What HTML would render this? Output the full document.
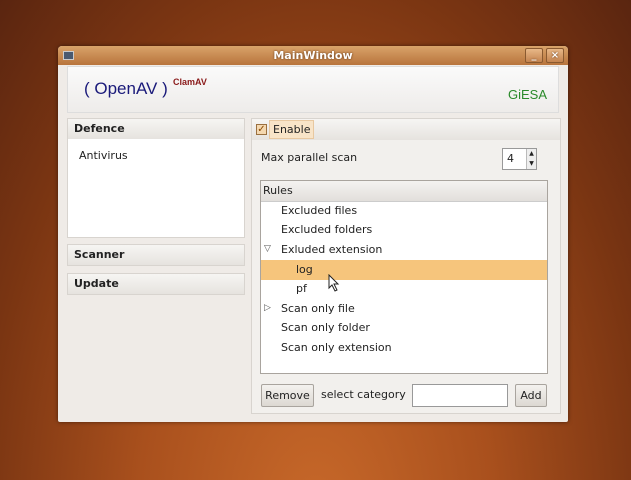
<html><head><style>
body{margin:0;width:631px;height:480px;overflow:hidden;font-family:"DejaVu Sans","Liberation Sans",sans-serif;font-size:11px;color:#222;
background:radial-gradient(ellipse at 50% 110%,#c8692a 0%,#a9501d 40%,#7a3512 75%,#5a2510 100%);position:relative}
*{box-sizing:border-box}
.a{position:absolute}
.win{left:58px;top:46px;width:510px;height:376px;background:#efebe7;border-radius:4px 4px 2px 2px;box-shadow:0 0 4px rgba(0,0,0,.5)}
.title{left:0;top:0;width:510px;height:19px;background:linear-gradient(#d9a36a,#b8743c);border-radius:4px 4px 0 0;color:#fff;font-weight:bold;text-align:center;line-height:19px;font-size:11px;text-shadow:0 0 2px #5a3010}
.tb{top:2px;width:18px;height:15px;border:1px solid #8a5a30;border-radius:2px;background:linear-gradient(#e8b888,#c48450);color:#fff;font-size:10px;line-height:13px;text-align:center;font-weight:bold}
.hdr{left:9px;top:20px;width:492px;height:47px;background:linear-gradient(#fafafa,#eeecea);border:1px solid #ddd}
.ph{background:linear-gradient(#f6f5f3,#e6e3df);border:1px solid #d8d4cf;font-weight:bold;height:22px;line-height:20px;padding-left:6px}
.row{position:absolute;left:20px;height:19px;line-height:19px}
.btn{border:1px solid #a9a49e;border-radius:2px;background:linear-gradient(#f4f2ef,#dcd8d2);height:23px;line-height:21px;text-align:center}
</style></head><body>
<div class="a win">
 <div class="a title">MainWindow
  <div class="a" style="left:5px;top:5px;width:11px;height:9px;background:#4a5a70;border:1px solid #ccc"></div>
  <div class="a tb" style="left:467px">_</div><div class="a tb" style="left:488px">×</div>
 </div>
 <div class="a hdr">
  <div class="a" style="left:16px;top:12px;font-size:17px;color:#1a1a7a;font-family:'Liberation Sans',sans-serif">( OpenAV )</div>
  <div class="a" style="left:105px;top:10px;font-size:9px;color:#8a1a1a;font-weight:bold;font-family:'Liberation Sans',sans-serif">ClamAV</div>
  <div class="a" style="left:440px;top:20px;font-size:13px;color:#2a8a2a;font-family:'Liberation Sans',sans-serif">GiESA</div>
 </div>
 <div class="a ph" style="left:9px;top:72px;width:178px">Defence</div>
 <div class="a" style="left:9px;top:93px;width:178px;height:99px;background:#fff;border:1px solid #d8d4cf;border-top:0"><div style="padding:10px 11px">Antivirus</div></div>
 <div class="a ph" style="left:9px;top:198px;width:178px">Scanner</div>
 <div class="a ph" style="left:9px;top:227px;width:178px">Update</div>
 <div class="a" style="left:193px;top:72px;width:310px;height:296px;background:#f2f0ed;border:1px solid #d8d4cf">
  <div class="a" style="left:0;top:0;width:308px;height:21px;background:linear-gradient(#f6f5f3,#e6e3df)"></div>
  <div class="a" style="left:4px;top:5px;width:11px;height:11px;border:1px solid #9a7040;background:#f4d8b0;font-size:10px;line-height:9px;color:#8a4a00;text-align:center">✓</div>
  <div class="a" style="left:17px;top:1px;padding:0 3px;height:19px;line-height:18px;background:#f8e4c8;border:1px solid #e8c8a0">Enable</div>
  <div class="a" style="left:9px;top:32px">Max parallel scan</div>
  <div class="a" style="left:250px;top:29px;width:35px;height:22px;background:#fff;border:1px solid #999"><span style="position:absolute;left:4px;top:3px">4</span><div class="a" style="right:0;top:0;width:10px;height:20px;border-left:1px solid #bbb;background:#eee;font-size:6px;line-height:10px;text-align:center">▲<br>▼</div></div>
  <div class="a" style="left:8px;top:61px;width:288px;height:194px;background:#fff;border:1px solid #a9a49e">
   <div class="a" style="left:0;top:0;width:286px;height:21px;line-height:20px;background:linear-gradient(#f4f3f1,#e2dfdb);border-bottom:1px solid #ccc;padding-left:2px">Rules</div>
   <div class="row" style="top:20px">Excluded files</div>
   <div class="row" style="top:39px">Excluded folders</div>
   <div class="a" style="left:3px;top:59px;font-size:9px;line-height:19px;color:#555">▽</div>
   <div class="row" style="top:59px">Exluded extension</div>
   <div class="a" style="left:0;top:79px;width:286px;height:20px;background:#f6c57c"></div>
   <div class="row" style="top:79px;left:35px">log</div>
   <svg class="a" style="left:67px;top:93px" width="12" height="18" viewBox="0 0 12 18"><path d="M1 1 L1 14 L4 11 L7 17 L9 16 L6 10 L10 10 Z" fill="#fff" stroke="#222" stroke-width="1"/></svg>
   <div class="row" style="top:98px;left:35px">pf</div>
   <div class="a" style="left:3px;top:118px;font-size:9px;line-height:19px;color:#555">▷</div>
   <div class="row" style="top:118px">Scan only file</div>
   <div class="row" style="top:137px">Scan only folder</div>
   <div class="row" style="top:157px">Scan only extension</div>
  </div>
  <div class="a btn" style="left:9px;top:265px;width:53px">Remove</div>
  <div class="a" style="left:69px;top:269px">select category</div>
  <div class="a" style="left:160px;top:265px;width:96px;height:23px;background:#fff;border:1px solid #999"></div>
  <div class="a btn" style="left:263px;top:265px;width:32px">Add</div>
 </div>
</div>
</body></html>
